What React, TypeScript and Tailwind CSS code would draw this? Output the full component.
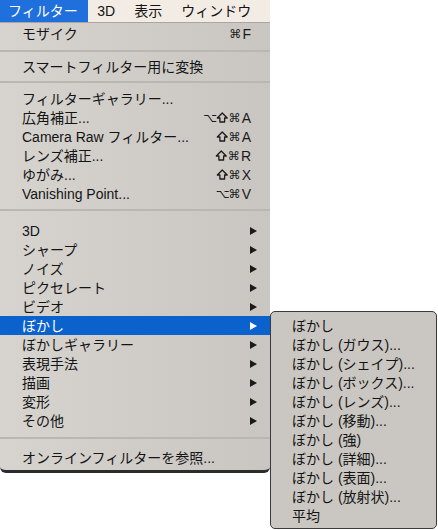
import React from "react";

const FONT = { fontFamily: '"Liberation Sans", "Noto Sans CJK JP", sans-serif' };

function Arrow({ white }: { white?: boolean }) {
  return (
    <svg width="7" height="8" viewBox="0 0 7 8" className="block">
      <polygon points="0,0 7,4 0,8" fill={white ? "#ffffff" : "#1a1a1a"} />
    </svg>
  );
}

function ShiftIcon() {
  return (
    <svg width="12.5" height="11" viewBox="0 0 12.5 11" className="block">
      <path
        d="M6.25 1 L11.2 6 L8.6 6 L8.6 10 L3.9 10 L3.9 6 L1.3 6 Z"
        fill="none"
        stroke="#1a1a1a"
        strokeWidth="1.3"
        strokeLinejoin="round"
      />
    </svg>
  );
}

function Shortcut({ mods, letter }: { mods: string[]; letter: string }) {
  return (
    <div className="flex items-center text-[#1a1a1a]">
      {mods.map((m, i) =>
        m === "⇧" ? (
          <ShiftIcon key={i} />
        ) : (
          <span
            key={i}
            className="inline-block w-[12.5px] text-center text-[12px] leading-none"
            style={{ fontFamily: '"DejaVu Sans", sans-serif' }}
          >
            {m}
          </span>
        )
      )}
      <span className="inline-block pl-[1px] text-[14px] leading-none">{letter}</span>
    </div>
  );
}

function Row({
  label,
  mods,
  letter,
  sub,
  active,
}: {
  label: string;
  mods?: string[];
  letter?: string;
  sub?: boolean;
  active?: boolean;
}) {
  return (
    <div
      className={
        "flex h-[19px] items-center justify-between pl-[22px] " +
        (sub ? "pr-[13px] " : "pr-[19px] ") +
        (active ? "bg-[#0c62cd] text-white" : "text-[#141414]")
      }
    >
      <span className="text-[14px] leading-none whitespace-nowrap">{label}</span>
      {sub ? <Arrow white={active} /> : letter ? <Shortcut mods={mods || []} letter={letter} /> : null}
    </div>
  );
}

function Sep({ h, top }: { h: string; top: string }) {
  return (
    <div className={h + " " + top}>
      <div className="h-[2px] bg-[#bab7b3]" />
    </div>
  );
}

export default function App() {
  const subItems = [
    "ぼかし",
    "ぼかし (ガウス)...",
    "ぼかし (シェイプ)...",
    "ぼかし (ボックス)...",
    "ぼかし (レンズ)...",
    "ぼかし (移動)...",
    "ぼかし (強)",
    "ぼかし (詳細)...",
    "ぼかし (表面)...",
    "ぼかし (放射状)...",
    "平均",
  ];
  const subGroup = [
    ["3D", false],
    ["シャープ", false],
    ["ノイズ", false],
    ["ピクセレート", false],
    ["ビデオ", false],
    ["ぼかし", true],
    ["ぼかしギャラリー", false],
    ["表現手法", false],
    ["描画", false],
    ["変形", false],
    ["その他", false],
  ] as const;

  return (
    <div className="relative h-[530px] w-[438px] overflow-hidden bg-white" style={FONT}>
      <div className="w-[270px]">
        {/* menu bar */}
        <div className="flex h-[23px] items-stretch border-b border-[#aaa6a2] bg-[#f3ece4] text-[14px] text-[#141414]">
          <div className="flex items-center bg-[#1f6fdc] pl-[8px] pr-[10px] text-white">フィルター</div>
          <div className="flex items-center px-[9.5px]">3D</div>
          <div className="flex items-center px-[9.5px]">表示</div>
          <div className="flex items-center px-[9.5px]">ウィンドウ</div>
        </div>
        {/* main menu */}
        <div className="rounded-b-[6px] border-b-[3px] border-[#2c2c2c] bg-linear-to-r from-[#d7d4d0] to-[#c9c6c2] pt-[1px] pb-[3px]">
          <Row label="モザイク" mods={["⌘"]} letter="F" />
          <Sep h="h-[14px]" top="pt-[7px]" />
          <Row label="スマートフィルター用に変換" />
          <Sep h="h-[13px]" top="pt-[5px]" />
          <Row label="フィルターギャラリー..." />
          <Row label="広角補正..." mods={["⌥", "⇧", "⌘"]} letter="A" />
          <Row label="Camera Raw フィルター..." mods={["⇧", "⌘"]} letter="A" />
          <Row label="レンズ補正..." mods={["⇧", "⌘"]} letter="R" />
          <Row label="ゆがみ..." mods={["⇧", "⌘"]} letter="X" />
          <Row label="Vanishing Point..." mods={["⌥", "⌘"]} letter="V" />
          <Sep h="h-[18px]" top="pt-[6px]" />
          {subGroup.map(([l, a]) => (
            <Row key={l} label={l} sub active={a} />
          ))}
          <Sep h="h-[18px]" top="pt-[7px]" />
          <Row label="オンラインフィルターを参照..." />
        </div>
      </div>

      {/* submenu */}
      <div className="absolute left-[270px] top-[311px] w-[167px] rounded-[5px] border border-[#3a3a3a] bg-[#cac7c3] pt-[4px] pb-[3px]">
        {subItems.map((s) => (
          <div key={s} className="flex h-[19px] items-center pl-[21px] text-[14px] leading-none text-[#141414] whitespace-nowrap">
            {s}
          </div>
        ))}
      </div>
    </div>
  );
}
